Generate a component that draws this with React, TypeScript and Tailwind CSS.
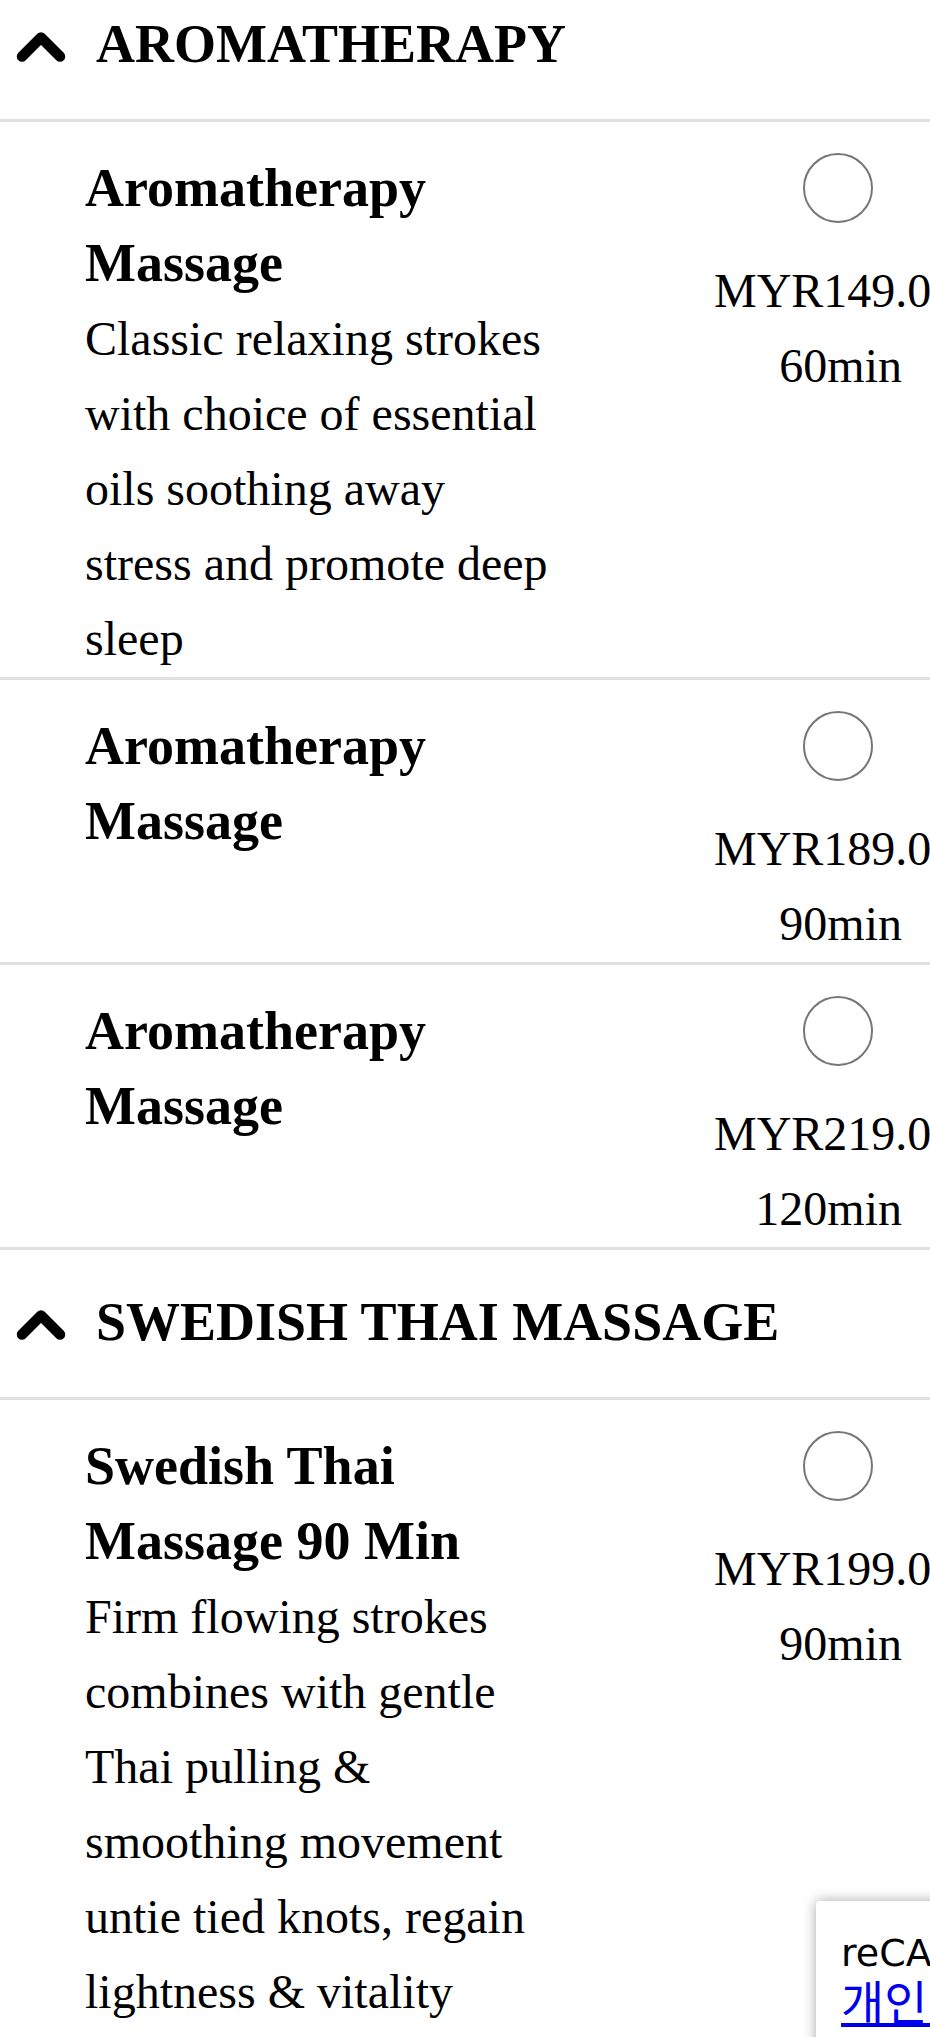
import React from "react";

type Servicio = {
  nombre: string;
  descripcion?: string;
  precio: string;
  duracion: string;
};

type Categoria = {
  titulo: string;
  servicios: Servicio[];
};

const categorias: Categoria[] = [
  {
    titulo: "AROMATHERAPY",
    servicios: [
      {
        nombre: "Aromatherapy Massage",
        descripcion:
          "Classic relaxing strokes with choice of essential oils soothing away stress and promote deep sleep",
        precio: "MYR149.00",
        duracion: "60min",
      },
      { nombre: "Aromatherapy Massage", precio: "MYR189.00", duracion: "90min" },
      { nombre: "Aromatherapy Massage", precio: "MYR219.00", duracion: "120min" },
    ],
  },
  {
    titulo: "SWEDISH THAI MASSAGE",
    servicios: [
      {
        nombre: "Swedish Thai Massage 90 Min",
        descripcion:
          "Firm flowing strokes combines with gentle Thai pulling & smoothing movement untie tied knots, regain lightness & vitality",
        precio: "MYR199.00",
        duracion: "90min",
      },
    ],
  },
];

function Chevron() {
  return (
    <svg width="50" height="34" viewBox="0 0 50 34" className="mt-[3px] shrink-0" aria-hidden>
      <polyline
        points="6,27.5 25,8.5 44,27.5"
        fill="none"
        stroke="#000"
        strokeWidth="10.5"
        strokeLinecap="round"
        strokeLinejoin="round"
      />
    </svg>
  );
}

function CategoriaHeader({ titulo, primera }: { titulo: string; primera: boolean }) {
  return (
    <div
      className={
        primera
          ? "flex items-center gap-[30px] border-b-[3px] border-[#e0e0e0] pt-[7px] pb-[37px] pl-[16px]"
          : "flex items-center gap-[30px] border-b-[3px] border-[#e0e0e0] pt-[35px] pb-[37px] pl-[16px]"
      }
    >
      <Chevron />
      <h2 className="whitespace-nowrap text-[54px] font-bold leading-[75px]">{titulo}</h2>
    </div>
  );
}

function ServicioFila({ servicio, ultima }: { servicio: Servicio; ultima: boolean }) {
  return (
    <div
      className={
        ultima
          ? "flex border-b-[3px] border-[#e0e0e0] pt-[29px] pb-[40px] pl-[85px]"
          : "flex border-b-[3px] border-[#e0e0e0] pt-[29px] pb-[1px] pl-[85px]"
      }
    >
      <div className="w-[465px] shrink-0">
        <h3 className="text-[54px] font-bold leading-[75px]">{servicio.nombre}</h3>
        {servicio.descripcion && <p className="text-[48px] leading-[75px]">{servicio.descripcion}</p>}
      </div>
      <div className="ml-[164px] flex w-[188px] shrink-0 flex-col items-end text-right">
        <span className="mt-[2px] mr-[29px] mb-[30px] block h-[70px] w-[70px] rounded-full border-[2.5px] border-[#767676]" />
        <span className="self-start whitespace-nowrap text-[48px] leading-[75px]">{servicio.precio}</span>
        <span className="text-[48px] leading-[75px]">{servicio.duracion}</span>
      </div>
    </div>
  );
}

export default function App() {
  return (
    <div className="relative h-screen w-full overflow-hidden bg-white font-['Liberation_Serif',serif] text-black">
      {categorias.map((cat, i) => (
        <section key={cat.titulo}>
          <CategoriaHeader titulo={cat.titulo} primera={i === 0} />
          {cat.servicios.map((s, j) => (
            <ServicioFila
              key={s.precio}
              servicio={s}
              ultima={i === categorias.length - 1 && j === cat.servicios.length - 1}
            />
          ))}
        </section>
      ))}

      <div className="absolute top-[1901px] left-[816px] h-[160px] w-[460px] rounded-[4px] bg-white pt-[29px] pl-[25px] shadow-[0_0_13px_rgba(0,0,0,0.35)]">
        <p className="whitespace-nowrap font-['DejaVu_Sans','Noto_Sans_CJK_KR',sans-serif] text-[38px] leading-[46px] text-black">
          reCAPTCHA 사용 중
        </p>
        <p className="whitespace-nowrap font-['Noto_Sans_CJK_KR',sans-serif] text-[47px] leading-[48px]">
          <a href="#" className="text-[#0000ee] underline">
            개인정보처리방침
          </a>{" "}
          -{" "}
          <a href="#" className="text-[#0000ee] underline">
            약관
          </a>
        </p>
      </div>
    </div>
  );
}
